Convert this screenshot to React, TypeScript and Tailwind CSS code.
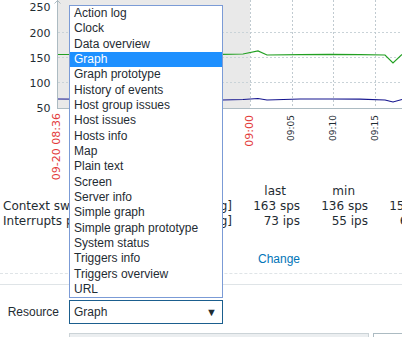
import React from 'react';

const widgetTypes = [
  'Action log',
  'Clock',
  'Data overview',
  'Graph',
  'Graph prototype',
  'History of events',
  'Host group issues',
  'Host issues',
  'Hosts info',
  'Map',
  'Plain text',
  'Screen',
  'Server info',
  'Simple graph',
  'Simple graph prototype',
  'System status',
  'Triggers info',
  'Triggers overview',
  'URL',
];

const legendRows = [
  { name: 'Context switches per second', last: '163 sps', min: '136 sps', avg: '154 sps' },
  { name: 'Interrupts per second', last: '73 ips', min: '55 ips', avg: '64 ips' },
];

const GraphPreview: React.FC = () => {
  const yLabels = [
    { v: '250', y: 11 },
    { v: '200', y: 36.5 },
    { v: '150', y: 61.5 },
    { v: '100', y: 86.5 },
    { v: '50', y: 111.5 },
  ];

  const green = '58,54.5 120,54.5 180,54 222,54.3 243,54 258,51 267,55 300,54.7 330,54.3 360,54.6 385,55 393,63 402,54.5';
  const blue = '58,99 120,99.5 180,99.5 222,100 243,99.5 258,98.5 267,100 300,99 330,99 360,99.2 385,100 393,102 402,99.5';

  return (
    <svg width={402} height={184} className="block font-['DejaVu_Sans',sans-serif]">
      {/* work period shading */}
      <rect x={58} y={0} width={192} height={108} fill="#e9e9e9" />

      {/* grid */}
      {[32.5, 57.5, 82.5].map((y) => (
        <line key={y} x1={58} x2={402} y1={y} y2={y} stroke="#c9d3d8" strokeDasharray="2 2" />
      ))}
      {[250.5, 292.5, 333.5, 375.5].map((x) => (
        <line key={x} x1={x} x2={x} y1={0} y2={108} stroke="#c0cad0" strokeDasharray="2 2" />
      ))}

      {/* axes */}
      <line x1={57.5} x2={57.5} y1={0} y2={109} stroke="#acbbc2" />
      <line x1={57} x2={402} y1={108.5} y2={108.5} stroke="#acbbc2" />
      <polyline points="54.5,3.5 57.5,0.5 60.5,3.5" fill="none" stroke="#acbbc2" />

      {/* data */}
      <polyline points={green} fill="none" stroke="#22a022" strokeWidth={1.2} />
      <polyline points={blue} fill="none" stroke="#15158f" strokeWidth={1.2} />

      {yLabels.map((l) => (
        <text key={l.v} x={50.5} y={l.y} textAnchor="end" fontSize={11} fill="#1f2c33">
          {l.v}
        </text>
      ))}

      {/* time labels */}
      <text transform="translate(60,113) rotate(-90)" textAnchor="end" fontSize={11} fill="#e33b3b">
        09-20 08:36
      </text>
      <text transform="translate(252.5,115) rotate(-90)" textAnchor="end" fontSize={11} fill="#e33b3b">
        09:00
      </text>
      {[
        { t: '09:05', x: 294 },
        { t: '09:10', x: 336 },
        { t: '09:15', x: 378 },
      ].map((l) => (
        <text
          key={l.t}
          transform={`translate(${l.x},115) rotate(-90)`}
          textAnchor="end"
          fontSize={9}
          fill="#1f2c33"
        >
          {l.t}
        </text>
      ))}
    </svg>
  );
};

export default function App() {
  return (
    <div className="relative w-[402px] h-[337px] overflow-hidden bg-white text-[#1f2c33] font-['Liberation_Sans',Arial,sans-serif] text-[12px]">
      <GraphPreview />

      {/* legend */}
      <div className="font-['DejaVu_Sans',sans-serif] text-[12px] leading-[15px] pl-[3px] whitespace-nowrap">
        <div className="flex">
          <span className="w-[194px] shrink-0" />
          <span className="w-[35px] shrink-0" />
          <span className="w-[68px] shrink-0 text-right pr-[14px]">last</span>
          <span className="w-[68px] shrink-0 text-right pr-[13px]">min</span>
          <span className="w-[68px] shrink-0 text-right pr-[10px]">avg</span>
        </div>
        {legendRows.map((r) => (
          <div key={r.name} className="flex">
            <span className="w-[194px] shrink-0 overflow-hidden">{r.name}</span>
            <span className="w-[35px] shrink-0 text-right">[avg]</span>
            <span className="w-[68px] shrink-0 text-right">{r.last}</span>
            <span className="w-[68px] shrink-0 text-right">{r.min}</span>
            <span className="w-[68px] shrink-0 text-right">{r.avg}</span>
          </div>
        ))}
      </div>

      <div className="mt-[23px] h-[15px] leading-[15px] pl-[258px]">
        <a className="text-[#0275b8] cursor-pointer">Change</a>
      </div>

      <div className="mt-[6px] border-t border-dashed border-[#dfe4e7]" />
      <div className="mt-[10px] border-t border-[#dfe4e7]" />

      {/* form row */}
      <div className="mt-[15px] flex items-center">
        <label className="w-[59px] shrink-0 text-right">Resource</label>
        <div className="ml-[10px] w-[154px] h-[24px] shrink-0 border border-[#1b5e8e] bg-white flex items-center justify-between pl-[4px] pr-[5px]">
          <span>Graph</span>
          <span className="text-[11px] leading-none">▼</span>
        </div>
      </div>

      <div className="mt-[9px] ml-[69px] flex gap-[4px]">
        <div className="w-[300px] h-[24px] shrink-0 bg-[#ebeef0] border border-[#cbd3d7]" />
        <div className="w-[60px] h-[24px] shrink-0 bg-white border border-[#acbbc2]" />
      </div>

      {/* open select list */}
      <div className="absolute left-[69px] top-[5px] w-[154px] border border-[#7b9bd6] bg-white">
        {widgetTypes.map((t) => (
          <div
            key={t}
            className={
              t === 'Graph'
                ? 'h-[15.33px] leading-[15.33px] pl-[4px] bg-[#1e90ff] text-white'
                : 'h-[15.33px] leading-[15.33px] pl-[4px]'
            }
          >
            {t}
          </div>
        ))}
      </div>
    </div>
  );
}
